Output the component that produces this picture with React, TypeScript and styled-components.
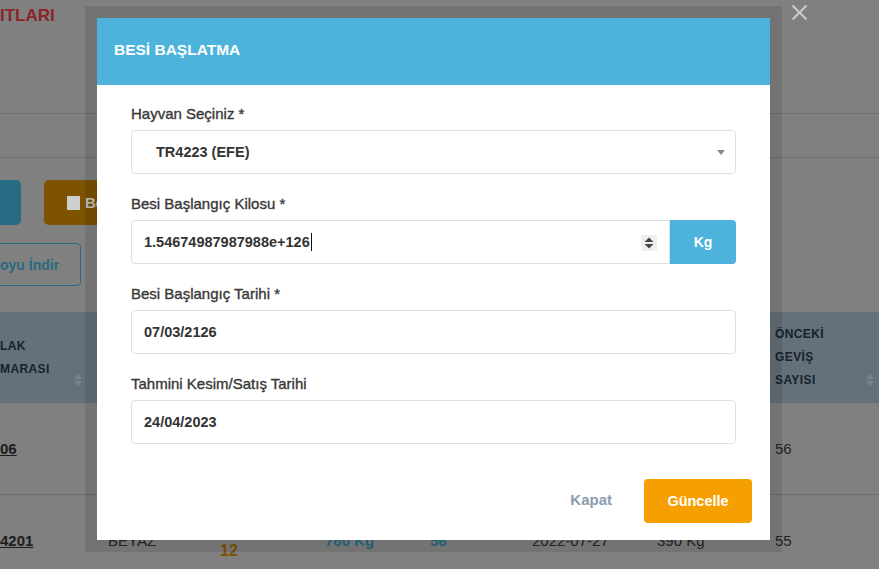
import { createGlobalStyle, styled } from 'styled-components'

const GlobalStyle = createGlobalStyle`
  * { box-sizing: border-box; }
  html, body {
    margin: 0;
    padding: 0;
    overflow: hidden;
    font-family: "Liberation Sans", Arial, sans-serif;
  }
`

interface Row {
  id: string;
  cells: string[];
  count: string;
}

const rows: Row[] = [
  { id: '06', cells: ['SİYAH', '14', '720 Kg', '51', '2022-06-11', '410 Kg'], count: '56' },
  { id: '4201', cells: ['BEYAZ', '12', '760 Kg', '56', '2022-07-27', '390 Kg'], count: '55' },
]

const SortIcon = () => (
  <SortMark width="8" height="14" viewBox="0 0 8 14">
    <path d="M0 6 L4 1 L8 6 Z" fill="currentColor" />
    <path d="M0 8 L4 13 L8 8 Z" fill="currentColor" />
  </SortMark>
)

export default function App() {
  return (
    <>
      <GlobalStyle />
      <Page>
        <TitleBar>
          <PageTitle>ITLARI</PageTitle>
        </TitleBar>
        <FilterBar />
        <Toolbar>
          <TealButton />
          <OrangeButton>
            <CheckSquare />
            Besi
          </OrangeButton>
        </Toolbar>
        <ExportRow>
          <OutlineButton>oyu İndir</OutlineButton>
        </ExportRow>
        <Table>
          <HeadCell $first>
            <HeadText>LAK<br />MARASI</HeadText>
            <SortIcon />
          </HeadCell>
          <HeadCell><HeadText>RENK</HeadText><SortIcon /></HeadCell>
          <HeadCell><HeadText>YAŞ</HeadText><SortIcon /></HeadCell>
          <HeadCell><HeadText>CANLI<br />KİLO</HeadText><SortIcon /></HeadCell>
          <HeadCell><HeadText>GÜN</HeadText><SortIcon /></HeadCell>
          <HeadCell><HeadText>DOĞUM<br />TARİHİ</HeadText><SortIcon /></HeadCell>
          <HeadCell><HeadText>DOĞUM<br />KİLOSU</HeadText><SortIcon /></HeadCell>
          <HeadCell>
            <HeadText>ÖNCEKİ<br />GEVİŞ<br />SAYISI</HeadText>
            <SortIcon />
          </HeadCell>
          {rows.map((row) => (
            <RowGroup key={row.id}>
              <Cell $first><IdLink>{row.id}</IdLink></Cell>
              <Cell>{row.cells[0]}</Cell>
              <Cell>
                <Stack>
                  <span>DANA</span>
                  <AgeText>{row.cells[1]}</AgeText>
                </Stack>
              </Cell>
              <Cell><Accent>{row.cells[2]}</Accent></Cell>
              <Cell><Accent>{row.cells[3]}</Accent></Cell>
              <Cell>{row.cells[4]}</Cell>
              <Cell>{row.cells[5]}</Cell>
              <Cell>{row.count}</Cell>
            </RowGroup>
          ))}
        </Table>
      </Page>

      <CloseButton aria-label="Kapat">
        <svg width="17" height="17" viewBox="0 0 17 17">
          <path d="M1.5 1.5 L15.5 15.5 M15.5 1.5 L1.5 15.5" stroke="currentColor" strokeWidth="2" />
        </svg>
      </CloseButton>

      <ModalFrame>
        <ModalContent>
          <ModalHeader>
            <ModalTitle>BESİ BAŞLATMA</ModalTitle>
          </ModalHeader>
          <ModalBody>
            <FormGroup>
              <Label>Hayvan Seçiniz *</Label>
              <SelectField>
                TR4223 (EFE)
                <svg width="8" height="5" viewBox="0 0 8 5">
                  <path d="M0 0 L8 0 L4 5 Z" fill="#888" />
                </svg>
              </SelectField>
            </FormGroup>
            <FormGroup>
              <Label>Besi Başlangıç Kilosu *</Label>
              <InputGroup>
                <NumberField>
                  1.54674987987988e+126
                  <Caret />
                  <Spinner width="16" height="16" viewBox="0 0 16 16">
                    <rect width="16" height="16" fill="#efefef" />
                    <path d="M3.5 7 L8 2.5 L12.5 7 Z" fill="#444" />
                    <path d="M3.5 9 L8 13.5 L12.5 9 Z" fill="#444" />
                  </Spinner>
                </NumberField>
                <Addon>Kg</Addon>
              </InputGroup>
            </FormGroup>
            <FormGroup>
              <Label>Besi Başlangıç Tarihi *</Label>
              <Field>07/03/2126</Field>
            </FormGroup>
            <FormGroup>
              <Label>Tahmini Kesim/Satış Tarihi</Label>
              <Field>24/04/2023</Field>
            </FormGroup>
          </ModalBody>
          <ModalFooter>
            <TextButton>Kapat</TextButton>
            <PrimaryButton>Güncelle</PrimaryButton>
          </ModalFooter>
        </ModalContent>
      </ModalFrame>
    </>
  )
}

const Page = styled.div`
  width: 100%;
  height: 569px;
  overflow: hidden;
  background: #808080;
  color: #262626;
`

const TitleBar = styled.div`
  height: 114px;
  padding-top: 6px;
  border-bottom: 1px solid #6f6f6f;
`

const PageTitle = styled.h1`
  margin: 0;
  font-size: 17px;
  line-height: 20px;
  font-weight: 700;
  color: #8a2529;
`

const FilterBar = styled.div`
  height: 44px;
  border-bottom: 1px solid #6f6f6f;
`

const Toolbar = styled.div`
  display: flex;
  gap: 23px;
  padding-top: 22px;
`

const TealButton = styled.div`
  width: 41px;
  height: 45px;
  margin-left: -20px;
  border-radius: 5px;
  background: #286c83;
`

const OrangeButton = styled.div`
  display: flex;
  align-items: center;
  gap: 5px;
  width: 200px;
  height: 45px;
  padding-left: 23px;
  border-radius: 5px;
  background: #7d5300;
  color: #c8c8c8;
  font-size: 15px;
  font-weight: 700;
`

const CheckSquare = styled.span`
  width: 13px;
  height: 14px;
  border-radius: 1px;
  background: #cfcfcf;
`

const ExportRow = styled.div`
  padding-top: 18px;
`

const OutlineButton = styled.div`
  display: inline-flex;
  align-items: center;
  height: 43px;
  margin-left: -8px;
  padding: 0 21px 0 7px;
  border: 1px solid #286c83;
  border-radius: 4px;
  color: #286a80;
  font-size: 14px;
  font-weight: 700;
`

const Table = styled.div`
  display: grid;
  grid-template-columns: 94px 112px 105px 105px 102px 125px 118px 125px;
  margin-top: 26px;
`

const HeadCell = styled.div<{ $first?: boolean }>`
  display: flex;
  align-items: center;
  justify-content: space-between;
  height: 91px;
  padding: 0 12px 0 ${(p) => (p.$first ? '0' : '14px')};
  background: #65717a;
`

const HeadText = styled.div`
  font-size: 12px;
  line-height: 23px;
  font-weight: 700;
  letter-spacing: 0.4px;
  color: #17212b;
`

const SortMark = styled.svg`
  align-self: flex-end;
  margin-bottom: 16px;
  color: #7a8289;
  flex-shrink: 0;
`

const RowGroup = styled.div`
  display: contents;
`

const Cell = styled.div<{ $first?: boolean }>`
  display: flex;
  align-items: center;
  height: 92px;
  padding: 0 12px 0 ${(p) => (p.$first ? '0' : '14px')};
  border-bottom: 1px solid #6c6c6c;
  font-size: 15px;
  color: #262626;
`

const IdLink = styled.span`
  font-weight: 700;
  text-decoration: underline;
  color: #1c1c1c;
`

const Stack = styled.div`
  display: flex;
  flex-direction: column;
  line-height: 20px;
`

const AgeText = styled.span`
  font-size: 16px;
  font-weight: 700;
  color: #7d5300;
`

const Accent = styled.span`
  font-weight: 700;
  color: #286a80;
`

const CloseButton = styled.button`
  position: fixed;
  left: 791px;
  top: 4px;
  padding: 0;
  border: 0;
  background: none;
  color: #cccccc;
  line-height: 0;
`

const ModalFrame = styled.div`
  position: fixed;
  left: 85px;
  top: 6px;
  width: 697px;
  padding: 12px;
  background: rgba(0, 0, 0, 0.1);
`

const ModalContent = styled.div`
  height: 522px;
  background: #fff;
`

const ModalHeader = styled.div`
  display: flex;
  align-items: center;
  height: 67px;
  padding: 0 0 4px 17px;
  background: #4db3dc;
`

const ModalTitle = styled.h2`
  margin: 0;
  font-size: 15.5px;
  font-weight: 700;
  color: #fff;
`

const ModalBody = styled.div`
  padding: 20px 34px 0;
`

const FormGroup = styled.div`
  margin-bottom: 21px;
  &:last-child {
    margin-bottom: 0;
  }
`

const Label = styled.label`
  display: block;
  margin-bottom: 8px;
  font-size: 15px;
  line-height: 17px;
  color: #383838;
  -webkit-text-stroke: 0.35px #383838;
`

const Field = styled.div`
  display: flex;
  align-items: center;
  height: 44px;
  padding: 0 12px;
  border: 1px solid #dde1e6;
  border-radius: 4px;
  font-size: 14.5px;
  font-weight: 700;
  color: #333;
`

const SelectField = styled(Field)`
  justify-content: space-between;
  padding: 0 10px 0 24px;
`

const InputGroup = styled.div`
  display: flex;
`

const NumberField = styled(Field)`
  position: relative;
  flex: 1;
  border-radius: 4px 0 0 4px;
`

const Caret = styled.span`
  display: inline-block;
  width: 1px;
  height: 18px;
  margin-left: 1px;
  background: #111;
`

const Spinner = styled.svg`
  position: absolute;
  right: 12px;
  top: 14px;
`

const Addon = styled.div`
  display: flex;
  align-items: center;
  justify-content: center;
  width: 66px;
  height: 44px;
  border-radius: 0 4px 4px 0;
  background: #4db3dc;
  color: #fff;
  font-size: 14px;
  font-weight: 700;
`

const ModalFooter = styled.div`
  display: flex;
  justify-content: flex-end;
  align-items: center;
  gap: 32px;
  padding: 35px 18px 17px;
`

const TextButton = styled.button`
  padding: 0;
  border: 0;
  background: none;
  font-family: inherit;
  font-size: 15px;
  font-weight: 700;
  color: #8c9bb0;
  line-height: 17px;
  margin-top: -3px;
`

const PrimaryButton = styled.button`
  width: 108px;
  height: 44px;
  border: 0;
  border-radius: 4px;
  background: #f5a000;
  font-family: inherit;
  font-size: 14.5px;
  font-weight: 700;
  color: #fff;
`
